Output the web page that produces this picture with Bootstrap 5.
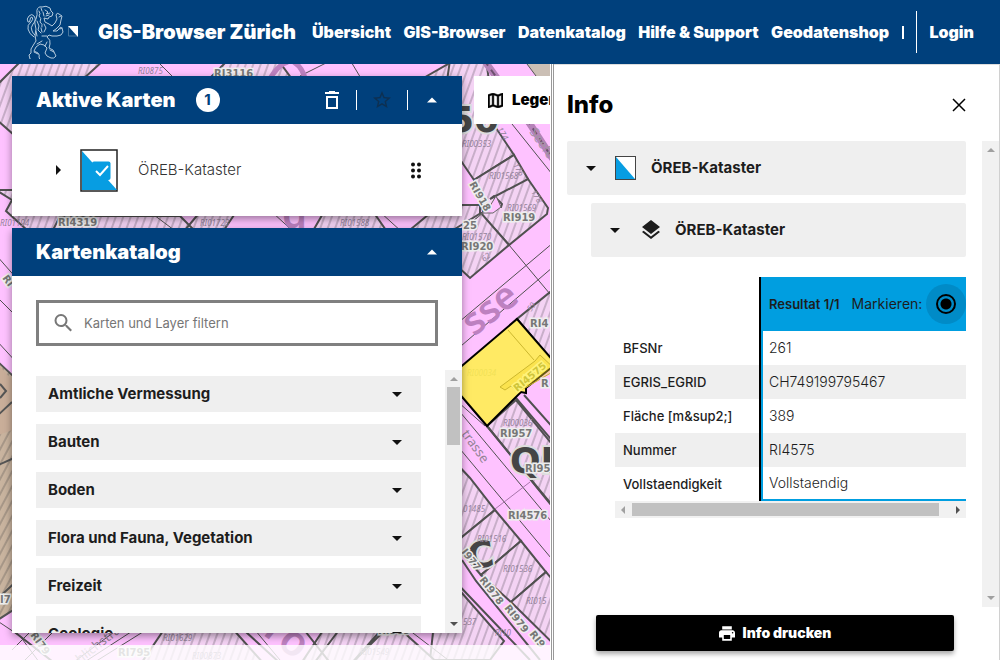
<!DOCTYPE html>
<html lang="de">
<head>
<meta charset="utf-8">
<meta name="viewport" content="width=device-width, initial-scale=1">
<title>GIS-Browser Zürich</title>
<link href="https://cdn.jsdelivr.net/npm/bootstrap@5.3.0/dist/css/bootstrap.min.css" rel="stylesheet">
<style>
  :root { --zh-blue: #00407c; --zh-cyan: #009ee0; --zh-grey: #efefef; }
  body { font-family: Inter, "Liberation Sans", sans-serif; font-size: 15px; line-height: 20px; color: #1d1d1d; }
  svg { display: block; flex: none; }
  button { font: inherit; color: inherit; }
  .bar-main { background: var(--zh-blue); color: #fff; height: 64px; flex: none; padding-left: 26px; padding-right: 26px; z-index: 3; }
  .bar-main a { color: #fff; text-decoration: none; white-space: nowrap; }
  .brand { font-size: 20px; font-weight: 900; line-height: 24px; gap: 19px; }
  .nav-main { font-size: 16px; font-weight: 900; }
  .nav-main .sep { width: 1px; height: 42px; background: #fff; }
  .nav-main .tick { width: 2px; height: 13px; background: #fff; }
  .map-area { background: #fec2ff; }
  .map-art { position: absolute; inset: 0; width: 100%; height: 100%; }
  .map-foot { height: 16px; background: rgba(255,255,255,.8); }
  .tools { padding: 12px; gap: 12px; z-index: 1; }
  .panels { width: 450px; flex: none; gap: 12px; }
  .panel { background: #fff; box-shadow: 0 3px 8px rgba(0,0,0,.4); }
  .panel-head { background: var(--zh-blue); color: #fff; height: 48px; padding: 0 22px 0 24px; }
  .panel-head h2 { font-size: 20px; line-height: 24px; font-weight: 900; margin: 0; }
  .count { width: 24px; height: 24px; border-radius: 50%; background: #fff; color: var(--zh-blue); font-weight: 700; margin-left: 20px; }
  .rule { width: 1px; height: 20px; background: #fff; }
  .plain { border: 0; background: none; padding: 0; }
  .layer { height: 92px; padding: 0 38px 0 42px; color: #333; font-weight: 300; }
  .layer-icon { margin: 0 18px; }
  .search { border: 3px solid #808080; height: 46px; margin: 24px; padding: 0 12px; gap: 8px; }
  .search input { border: 0; outline: 0; padding: 0; font-size: 13px; background: none; color: #555; }
  .search input::placeholder { color: #767676; opacity: 1; }
  .topics { padding: 6px 24px 0; gap: 12px; }
  .topic { height: 36px; flex: none; background: var(--zh-grey); border: 0; padding: 0 18px 0 12px; font-weight: 700; }
  .sbar { background: #f1f1f1; width: 17px; flex: none; }
  .sbar-y { padding: 6px 0; }
  .sbar-x { width: 100%; height: 17px; }
  .thumb-y { width: 13px; height: 58px; margin-top: 6px; background: #c1c1c1; }
  .thumb-x { width: 307px; height: 13px; margin-left: 4px; background: #c1c1c1; }
  .legend-btn { height: 48px; flex: none; width: 120px; border: 0; background: #fff; padding: 0 14px; gap: 9px; color: #000; font-weight: 900; }
  .splitter { width: 3px; border: solid #999; border-width: 0 1px; margin-left: 1px; background: #fff; flex: none; }
  .info { width: 446px; flex: none; background: #fff; border-top: 1px solid #ddd; border-right: 1px solid #d0d0d0; }
  .info-head { height: 76px; padding: 4px 32px 0 13px; color: #000; }
  .info-head h1 { font-size: 24px; font-weight: 800; line-height: 28px; margin: 0; }
  .info-body { padding: 0 16px 0 13px; }
  .result-bar { height: 54px; background: var(--zh-grey); border-radius: 2px; padding: 0 18px; font-weight: 700; width: 100%; border: 0; }
  .result-icon { margin: 0 12px 0 18px; }
  .nested { margin: 8px 0 0 24px; }
  .attrs-wrap { margin: 20px 0 0 24px; overflow: hidden; }
  .attrs { border-collapse: separate; border-spacing: 0; width: 100%; table-layout: fixed; font-size: 14px; }
  .attrs .names { width: 146px; }
  .attrs th, .attrs td { height: 34px; padding: 0 8px; vertical-align: middle; white-space: nowrap; }
  .attrs tbody th { font-size: 13px; font-weight: 500; border-right: 2px solid #000; }
  .attrs tbody td { border-left: 2px solid var(--zh-cyan); padding-left: 6px; font-weight: 300; }
  .attrs tbody tr:nth-child(even) > * { background: var(--zh-grey); }
  .attrs tbody tr:last-child td { border-bottom: 2px solid var(--zh-cyan); }
  .attrs thead > tr > * { height: 54px; }
  .attrs thead td { border-right: 2px solid #000; }
  .attrs thead th { background: var(--zh-cyan); font-size: 13px; font-weight: 600; padding-right: 0; overflow: hidden; }
  .attrs label { font-size: 14px; font-weight: 400; margin-left: 12px; }
  .halo { width: 40px; height: 40px; border-radius: 50%; background: #008bc7; margin-left: 4px; flex: none; }
  .halo input { appearance: none; margin: 0; width: 20px; height: 20px; border: 2px solid #000; border-radius: 50%; background: radial-gradient(circle, #000 5px, transparent 6px); }
  .print-btn { background: #000; color: #fff; border: 0; height: 36px; margin: 8px 45px 9px 42px; font-weight: 900; font-size: 14px; gap: 8px; box-shadow: 0 3px 5px rgba(0,0,0,.35); border-radius: 2px; }
  .parcel-no { font: 700 10px "DejaVu Sans", sans-serif; fill: #777; stroke: #eee; stroke-width: 3px; paint-order: stroke; }
  .house-no { font: italic 8px "Noto Sans", sans-serif; fill: #93829a; }
  .zone { font: 700 36px "DejaVu Sans", sans-serif; fill: #454545; stroke: #ddd; stroke-width: 4px; paint-order: stroke; }
  .street { font-family: "Noto Sans", sans-serif; fill: #bd81c0; }
</style>
</head>
<body class="vh-100 d-flex flex-column overflow-hidden">

<header class="bar-main d-flex align-items-center">
  <a href="#" class="brand d-flex align-items-center">
    <svg width="53" height="54" viewBox="26 5 53 54" aria-label="Kanton Zürich">
      <g fill="none" stroke="#b4cadd" stroke-width="1" stroke-linejoin="round" stroke-linecap="round">
        <path d="M37 10q1-4 5-3q4-2 8 1l1 3l2 2l-1 3l-3 1l-1 2l-4-1l1 4l4 2l3 2l3-3l2-4l-1-4q1-3 3-1l3 2l-1 4l-1 5l-4 4l-3 2h4l2-2q1-3 3-1l1 4l-2 3l-4 1h-5l-3-1l-2 2q4 3 3 7l-1 4l4 2l2 4l1 2q-2 3-5 2l-4-2l-2-3l2-5l-3-3l-4-1l-4 3l-2 4l4 2q2 2 1 4l1 3q-2 2-5 1l-5-2l-1-4l2-2v-4l3-5l2-3l-1-6l1-6l-1-5q-1-3 1-5l1-4z"/>
        <path d="M34 37q-5-3-6-8q-1-4 3-7q3-3 1-5q-2 0-2 3t-2 2q-2-3 1-6q3-3 5 0q3 4-1 8q-3 4-1 7q1 3 3 4M39 11q2 3 0 5q3 2 1 6q3 2 2 5M45 10l3 2l-2 2l4-1M46 16l3-1M37 21l2 5l-1 4l3 3M44 24l2 4l-2 4M42 36h5M37 44l5-3M47 42l-2 4M34 52l4 2M50 50l4 2M41 8l1 3M43 12l1 4M59 17l2-1M60 29l2-1M36 31l1 5M41 28l1 4"/>
      </g>
      <path d="M68.500 26.500v9.500h9" fill="none" stroke="#47769f"/>
      <path d="M68 26h10v11z" fill="#fff"/>
    </svg>
    <span>GIS-Browser Zürich</span>
  </a>
  <nav class="nav-main d-flex align-items-center justify-content-between flex-grow-1 ms-3" aria-label="Hauptnavigation">
    <a href="#">Übersicht</a>
    <a href="#">GIS-Browser</a>
    <a href="#">Datenkatalog</a>
    <a href="#">Hilfe &amp; Support</a>
    <a href="#">Geodatenshop</a>
    <span class="tick"></span>
    <span class="sep"></span>
    <a href="#">Login</a>
  </nav>
</header>

<main class="d-flex flex-grow-1 overflow-hidden">
  <section class="map-area position-relative d-flex flex-column flex-grow-1 overflow-hidden" aria-label="Karte">
    <svg class="map-art" aria-hidden="true">
      <defs>
        <pattern id="hatch" width="7" height="12" patternUnits="userSpaceOnUse" patternTransform="rotate(20)">
          <rect width="7" height="12" fill="#f4d3f4"/><path d="M1 0v12" stroke="#9c899e"/>
        </pattern>
        <pattern id="hatchTan" width="7" height="12" patternUnits="userSpaceOnUse" patternTransform="rotate(28)">
          <rect width="7" height="12" fill="#c9b49f"/><path d="M1 0v12" stroke="#857a70"/>
        </pattern>
      </defs>
      <g transform="translate(0 -64)">
        <!-- hatched buildings -->
        <g fill="url(#hatch)" stroke="#505050" stroke-width="2">
          <path d="M-4 86L22 60H104L60 100L20 144L14 135L-4 119z"/>
          <path d="M-4 190L12 200L6 211L60 260L90 216L60 190z"/>
          <path d="M208 80L228 60H278L300 90z"/>
          <path d="M420 80L455 60L480 90z"/>
          <path d="M60 216h120l20 20h-150zM180 236L205 206H240L220 236z"/>
          <path d="M325 210H372L390 236H310zM405 234L440 205H480V240z"/>
          <path d="M450 60H486L496 128L514 155L474 180L440 130z"/>
          <path d="M514 155L528 179L483 211L474 180z"/>
          <path d="M528 179L548 208L547 214L509 245L481 214L490 207L501 207L502 204L494 196L490 199z"/>
          <path d="M440 238L481 213L509 245L470 278L440 250z"/>
          <path d="M560 284L517 319L560 370z"/>
          <path d="M487 426L516 400L570 466L560 516z"/>
          <path d="M455 462L470 478L495 510L462 537L450 545z"/>
          <path d="M495 510L521 541L481 575L455 545L462 537z"/>
          <path d="M521 541L546 572L511 602L481 575z"/>
          <path d="M546 572L570 600V660L511 602z"/>
          <path d="M440 568L504 641L490 660H430z"/>
          <path d="M140 665L165 628H232L265 665zM300 665L330 620H395L350 665zM390 620L440 665H350z"/>
        </g>
        <path d="M-4 245L14 258V400L-4 372z" fill="#fec2ff"/>
        <path d="M472 222L490 206L496 196L501 207L493 213L483 213z" fill="#fec2ff" stroke="#666"/>
        <!-- mixed-use area on the west side -->
        <path d="M-4 360L60 420V580L-4 621z" fill="url(#hatchTan)" stroke="#555" stroke-width="2"/>
        <path d="M-4 362L12 380V430L-4 436z" fill="#c9ae99"/>
        <path d="M0 384l6 7l-6 7M-4 417L12 402M-4 600L20 578M-4 466l18-8" fill="none" stroke="#555" stroke-width="2"/>
        <path d="M524 60H560V100L548 92z" fill="#cbbfb5" stroke="#555"/>
        <!-- street edges and parcel lines -->
        <g fill="none" stroke="#505050">
          <path d="M525 122L552 155M512 124L552 174M-4 255L40 305M-4 296L40 340M-4 340L40 388" stroke-width="1"/>
          <path d="M484 60L530 124L560 170" stroke="#b583b8" stroke-width="7"/>
          <path d="M484 60L530 124L560 170" stroke="#6d506f" stroke-width="2" stroke-dasharray="7 5"/>
          <path d="M440 338L560 237M440 364L560 261M440 386L485 426M509 245L550 294L560 288" stroke-width="1"/>
          <path d="M455 388L487 426L556 510M516 398L556 445M524 395L556 431" stroke-width="2"/>
          <path d="M455 406L556 527M455 443L556 564" stroke-width="1"/>
          <path d="M462 560L476 581L540 660M450 576L530 660" stroke-width="2"/>
          <path d="M495 509L530 482" stroke="#a775aa"/>
          <path d="M156 60l22 22M300 76l28-14M350 60l12 20M-4 620l24 16l22 30M70 665l64-48M80 665l74-48M90 665l80-50M255 630l30 36M396 620l60 46M12 650l40-40M20 665l50-50M150 212l40 30M272 212l24 22M380 212l22 20" stroke-width="1"/>
          <path d="M12 630l45 35M235 622l46 42M298 622l33 42M345 622l-30 40" stroke-width="2"/>
        </g>
        <g class="street">
          <text font-size="38" font-weight="600" transform="translate(474 337) rotate(-38)">sse</text>
          <text font-size="40" font-weight="600" x="282" y="228">g</text>
          <text font-size="42" font-weight="600" transform="translate(262 634) rotate(38)">ro</text>
          <text font-size="13" fill="#a394a4" transform="translate(529 132) rotate(55)">Seefe</text>
          <text font-size="13" fill="#938295" transform="translate(461 434) rotate(54)">trasse</text>
          <text font-size="13" fill="#938295" transform="translate(80 664) rotate(-38)">hlichstra</text>
        </g>
        <path d="M290 60q14 6 16 24M268 82q10 -18 20 -20" fill="none" stroke="#bd81c0" stroke-width="5"/>
        <g class="zone"><text x="449" y="132">50</text><text x="510" y="473">QI</text><text x="468" y="568" transform="rotate(-8 478 560)">C</text></g>
        <g class="house-no">
          <text x="138" y="74">RI0875</text><text x="0" y="226">RI01194</text>
          <text x="200" y="226">RI01723</text><text x="340" y="226">RI01588</text>
          <text x="462" y="147">RI00353</text><text x="489" y="179">RI01568</text><text x="507" y="211">RI01569</text>
          <text x="462" y="240">RI01570</text><text x="467" y="376">RI00034</text><text x="503" y="426">RI00036</text>
          <text x="463" y="512">01485</text><text x="477" y="542">RI01516</text><text x="503" y="572">RI01536</text>
          <text x="526" y="604">RI015</text><text x="463" y="625">537</text><text x="495" y="636">RI10</text>
          <text x="163" y="641">RI01629</text><text x="192" y="659">RI00873</text><text x="360" y="655">RI01549</text>
          <text transform="translate(497 129) rotate(60)">174</text><text transform="translate(513 165) rotate(60)">176</text><text transform="translate(531 192) rotate(60)">178</text>
          <text transform="translate(484 262) rotate(-38)">62</text><text transform="translate(531 312) rotate(-55)">59</text>
        </g>
        <!-- selected parcel -->
        <path d="M517 319L556 364L526 388L526 393L521 392L487 426L450 383V376z" fill="#fff04b" fill-opacity=".86" stroke="#000" stroke-width="2"/>
        <path d="M500 387L535 361L540 355L556 370L525 388L517 391L511 386L505 390zM508 330L534 360" fill="#f4d92e" fill-opacity=".4" stroke="#ccb72e"/>
        <g class="parcel-no">
          <text x="214" y="77">RI3116</text><text x="58" y="226">RI4319</text>
          <text x="463" y="229">25</text><text transform="translate(469 184) rotate(60)">RI918</text>
          <text x="503" y="221">RI919</text><text x="461" y="250">RI920</text><text x="530" y="327">RI4</text>
          <text x="541" y="387">R</text><text x="500" y="437">RI957</text><text x="525" y="472">RI95</text><text x="508" y="519">RI4576</text>
          <text transform="translate(461 552) rotate(52)">I977</text><text transform="translate(479 580) rotate(52)">RI978</text>
          <text transform="translate(504 608) rotate(52)">RI979</text><text transform="translate(529 634) rotate(52)">RI9</text>
          <text x="118" y="656">RI795</text><text x="378" y="634">RI969</text><text x="0" y="603">I7</text>
          <text transform="translate(30 635) rotate(54)">RI79</text><text transform="translate(2 278) rotate(55)">RI</text>
          <text transform="translate(517 392) rotate(-40)" style="fill:#cfc53a;stroke:#fff37a">RI4575</text>
        </g>
      </g>
    </svg>

    <div class="tools position-relative d-flex align-items-start flex-grow-1 overflow-hidden">
      <div class="panels d-flex flex-column h-100">
        <section class="panel">
          <div class="panel-head d-flex align-items-center">
            <h2>Aktive Karten</h2>
            <span class="count d-flex align-items-center justify-content-center">1</span>
            <div class="d-flex align-items-center ms-auto">
              <button class="plain" aria-label="Alle entfernen"><svg width="16" height="18" viewBox="0 0 16 18"><path d="M1 2h14M5 1h6M3 6h10v11H3z" fill="none" stroke="#fff" stroke-width="2"/></svg></button>
              <span class="rule mx-3"></span>
              <button class="plain" aria-label="Favorit"><svg width="18" height="18" viewBox="2 2 20 20"><path d="M22 9.240l-7.190-.62L12 2 9.190 8.630 2 9.240l5.460 4.730L5.820 21 12 17.270 18.180 21l-1.630-7.030L22 9.240zM12 15.400l-3.760 2.270 1-4.280-3.320-2.880 4.380-.38L12 6.100l1.710 4.040 4.380.38-3.320 2.880 1 4.280L12 15.400z" fill="#0d3052"/></svg></button>
              <span class="rule mx-3"></span>
              <button class="plain" aria-label="Einklappen"><svg width="16" height="6" viewBox="-3 0 16 6"><path d="M0 5.500L5 .5l5 5z" fill="#fff"/></svg></button>
            </div>
          </div>
          <div class="layer d-flex align-items-center">
            <button class="plain" aria-label="Ausklappen"><svg width="8" height="10" viewBox="-2 0 8 10"><path d="M0 0l5 5l-5 5z" fill="#111"/></svg></button>
            <svg class="layer-icon" width="40" height="43" viewBox="0 0 40 43">
              <rect x="1" y="1" width="36" height="41" fill="#fff" stroke="#222" stroke-width="1.500"/>
              <path d="M2 2l35 39H2z" fill="#079de2"/><rect x="12" y="12.500" width="18.500" height="18.500" rx="2" fill="#079de2"/>
              <path d="M16 22l4 4l8-9" fill="none" stroke="#fff" stroke-width="2"/>
            </svg>
            <span>ÖREB-Kataster</span>
            <svg class="ms-auto" width="16" height="17" viewBox="-2 0 16 17" fill="#111"><circle cx="3" cy="2.500" r="2"/><circle cx="9" cy="2.500" r="2"/><circle cx="3" cy="8.500" r="2"/><circle cx="9" cy="8.500" r="2"/><circle cx="3" cy="14.500" r="2"/><circle cx="9" cy="14.500" r="2"/></svg>
          </div>
        </section>

        <section class="panel d-flex flex-column flex-grow-1 overflow-hidden">
          <div class="panel-head d-flex align-items-center flex-shrink-0">
            <h2>Kartenkatalog</h2>
            <button class="plain ms-auto" aria-label="Einklappen"><svg width="16" height="6" viewBox="-3 0 16 6"><path d="M0 5.500L5 .5l5 5z" fill="#fff"/></svg></button>
          </div>
          <label class="search d-flex align-items-center flex-shrink-0">
            <svg width="25" height="24" viewBox="0 0 24 24"><path d="M15.500 14h-.79l-.28-.27A6.470 6.470 0 0 0 16 9.500 6.500 6.500 0 1 0 9.500 16c1.610 0 3.090-.59 4.230-1.570l.27.28v.79l5 4.990L20.490 19l-4.990-5zm-6 0C7.010 14 5 11.990 5 9.500S7.010 5 9.500 5 14 7.010 14 9.500 11.990 14 9.500 14z" fill="#777"/></svg>
            <input type="text" class="flex-grow-1" placeholder="Karten und Layer filtern" aria-label="Karten und Layer filtern">
          </label>
          <div class="d-flex flex-grow-1 overflow-hidden">
            <div class="topics d-flex flex-column flex-grow-1 overflow-hidden">
              <button class="topic d-flex align-items-center justify-content-between">Amtliche Vermessung <svg width="12" height="5"><path d="M1 0h10L6 5z" fill="#111"/></svg></button>
              <button class="topic d-flex align-items-center justify-content-between">Bauten <svg width="12" height="5"><path d="M1 0h10L6 5z" fill="#111"/></svg></button>
              <button class="topic d-flex align-items-center justify-content-between">Boden <svg width="12" height="5"><path d="M1 0h10L6 5z" fill="#111"/></svg></button>
              <button class="topic d-flex align-items-center justify-content-between">Flora und Fauna, Vegetation <svg width="12" height="5"><path d="M1 0h10L6 5z" fill="#111"/></svg></button>
              <button class="topic d-flex align-items-center justify-content-between">Freizeit <svg width="12" height="5"><path d="M1 0h10L6 5z" fill="#111"/></svg></button>
              <button class="topic d-flex align-items-center justify-content-between">Geologie <svg width="12" height="5"><path d="M1 0h10L6 5z" fill="#111"/></svg></button>
            </div>
            <div class="sbar sbar-y d-flex flex-column align-items-center">
              <svg width="8" height="5"><path d="M0 5l4-4l4 4z" fill="#a0a0a0"/></svg>
              <div class="thumb-y"></div>
              <svg class="mt-auto" width="8" height="5"><path d="M0 0l4 4l4-4z" fill="#505050"/></svg>
            </div>
          </div>
        </section>
      </div>
      <button class="legend-btn d-flex align-items-center">
        <svg width="15" height="15" viewBox="3 3 18 18"><path d="M20.500 3l-.16.03L15 5.100 9 3 3.360 4.900c-.21.07-.36.25-.36.480V20.500c0 .28.22.5.5.5l.16-.03L9 18.900l6 2.100 5.640-1.900c.21-.07.36-.25.36-.480V3.500c0-.28-.22-.5-.5-.5zM10 5.470l4 1.400v11.660l-4-1.400V5.470zm-5 .99l3-1.010v11.700l-3 1.160V6.460zm14 11.080l-3 1.010V6.860l3-1.160v11.840z" stroke="#000" stroke-width=".6"/></svg>
        Legende
      </button>
    </div>
    <div class="map-foot position-relative"></div>
  </section>

  <div class="splitter"></div>

  <aside class="info d-flex flex-column">
    <div class="info-head d-flex align-items-center justify-content-between">
      <h1>Info</h1>
      <button class="plain" aria-label="Schliessen"><svg width="16" height="16"><path d="M2 2l12 12M14 2L2 14" stroke="#000" stroke-width="1.500"/></svg></button>
    </div>
    <div class="d-flex flex-grow-1 overflow-hidden">
      <div class="info-body flex-grow-1 overflow-hidden">
        <button class="result-bar d-flex align-items-center">
          <svg width="12" height="5"><path d="M1 0h10L6 5z" fill="#111"/></svg>
          <svg class="result-icon" width="24" height="24" viewBox="1 0 24 24"><rect x="1.500" y=".5" width="20" height="23" fill="#fff" stroke="#444"/><path d="M2 1l19 22H2z" fill="#079de2"/></svg>
          ÖREB-Kataster
        </button>
        <div class="nested">
          <button class="result-bar d-flex align-items-center">
            <svg width="12" height="5"><path d="M1 0h10L6 5z" fill="#111"/></svg>
            <svg class="result-icon" width="24" height="24" viewBox="0 0 24 24" fill="#1d1d1d"><path d="M11.990 18.540l-7.370-5.730L3 14.070l9 7 9-7-1.630-1.270-7.380 5.740zM12 16l7.360-5.730L21 9l-9-7-9 7 1.630 1.270L12 16z"/></svg>
            ÖREB-Kataster
          </button>
          <div class="attrs-wrap">
            <table class="attrs">
              <colgroup><col class="names"><col></colgroup>
              <thead>
                <tr><td></td><th scope="col"><div class="d-flex align-items-center">Resultat 1/1 <label for="mark">Markieren:</label><span class="halo d-flex align-items-center justify-content-center"><input type="radio" id="mark" name="mark" checked></span></div></th></tr>
              </thead>
              <tbody>
                <tr><th scope="row">BFSNr</th><td>261</td></tr>
                <tr><th scope="row">EGRIS_EGRID</th><td>CH749199795467</td></tr>
                <tr><th scope="row">Fläche [m&amp;sup2;]</th><td>389</td></tr>
                <tr><th scope="row">Nummer</th><td>RI4575</td></tr>
                <tr><th scope="row">Vollstaendigkeit</th><td>Vollstaendig</td></tr>
              </tbody>
            </table>
            <div class="sbar sbar-x d-flex align-items-center px-1">
              <svg width="9" height="8"><path d="M6 0L2 4l4 4z" fill="#a0a0a0"/></svg>
              <div class="thumb-x"></div>
              <svg class="ms-auto" width="7" height="8"><path d="M1 0l4 4l-4 4z" fill="#505050"/></svg>
            </div>
          </div>
        </div>
      </div>
      <div class="sbar sbar-y d-flex flex-column align-items-center">
        <svg width="8" height="5"><path d="M0 5l4-4l4 4z" fill="#a0a0a0"/></svg>
        <svg class="mt-auto" width="8" height="5"><path d="M0 0l4 4l4-4z" fill="#a0a0a0"/></svg>
      </div>
    </div>
    <button class="print-btn d-flex align-items-center justify-content-center flex-shrink-0">
      <svg width="16" height="15" viewBox="2 3 20 18" fill="#fff"><path d="M19 8H5c-1.660 0-3 1.340-3 3v6h4v4h12v-4h4v-6c0-1.660-1.340-3-3-3zm-3 11H8v-5h8v5zm3-7c-.55 0-1-.45-1-1s.45-1 1-1 1 .45 1 1-.45 1-1 1zm-1-9H6v4h12V3z"/></svg>
      Info drucken
    </button>
  </aside>
</main>

<script src="https://cdn.jsdelivr.net/npm/bootstrap@5.3.0/dist/js/bootstrap.bundle.min.js"></script>
</body>
</html>
